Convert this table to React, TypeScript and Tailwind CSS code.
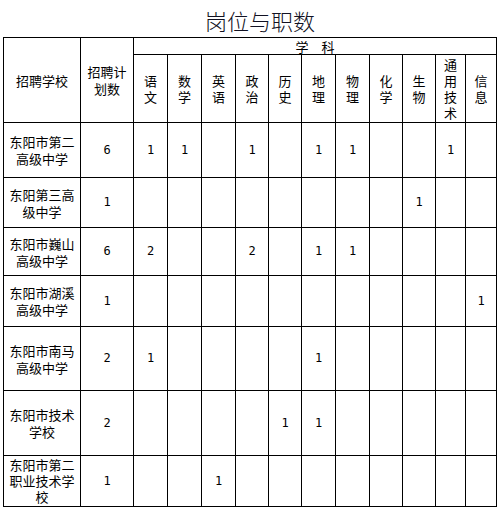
import React from "react";

const cjk = { fontFamily: '"Noto Sans CJK SC", "Noto Sans", sans-serif' };
const num = { fontFamily: '"DejaVu Sans Mono", "Liberation Mono", monospace' };

const subjects = [
  ["语", "文"],
  ["数", "学"],
  ["英", "语"],
  ["政", "治"],
  ["历", "史"],
  ["地", "理"],
  ["物", "理"],
  ["化", "学"],
  ["生", "物"],
  ["通", "用", "技", "术"],
  ["信", "息"],
];

type Row = { school: string[]; plan: string; vals: string[]; h: string };

const rows: Row[] = [
  { school: ["东阳市第二", "高级中学"], plan: "6", vals: ["1", "1", "", "1", "", "1", "1", "", "", "1", ""], h: "h-[55px]" },
  { school: ["东阳第三高", "级中学"], plan: "1", vals: ["", "", "", "", "", "", "", "", "1", "", ""], h: "h-[50px]" },
  { school: ["东阳市巍山", "高级中学"], plan: "6", vals: ["2", "", "", "2", "", "1", "1", "", "", "", ""], h: "h-[48px]" },
  { school: ["东阳市湖溪", "高级中学"], plan: "1", vals: ["", "", "", "", "", "", "", "", "", "", "1"], h: "h-[51px]" },
  { school: ["东阳市南马", "高级中学"], plan: "2", vals: ["1", "", "", "", "", "1", "", "", "", "", ""], h: "h-[64px]" },
  { school: ["东阳市技术", "学校"], plan: "2", vals: ["", "", "", "", "1", "1", "", "", "", "", ""], h: "h-[65px]" },
  { school: ["东阳市第二", "职业技术学", "校"], plan: "1", vals: ["", "", "1", "", "", "", "", "", "", "", ""], h: "h-[51px]" },
];

const colW = [77, 53, 34, 34, 34, 33, 33, 34, 34, 33, 33, 30, 31];

export default function App() {
  return (
    <div className="w-[500px] h-[510px] bg-white text-black" style={cjk}>
      <div className="h-[37px] flex items-center justify-center pl-5 pt-[3px]">
        <span className="text-[22px] font-light leading-none text-[#111122]">岗位与职数</span>
      </div>
      <table className="ml-[3px] w-[494px] table-fixed border-collapse text-[13px] leading-[17px]">
        <colgroup>
          {colW.map((w, i) => (
            <col key={i} style={{ width: w }} />
          ))}
        </colgroup>
        <tbody>
          <tr className="h-[17px]">
            <td rowSpan={2} className="border border-black text-center align-middle p-0">
              招聘学校
            </td>
            <td rowSpan={2} className="border border-black text-center align-middle p-0">
              招聘计
              <br />
              划数
            </td>
            <td colSpan={11} className="border border-black text-center align-middle p-0 leading-[15px]">
              学　科
            </td>
          </tr>
          <tr className="h-[68px]">
            {subjects.map((s, i) => (
              <td key={i} className="border border-black text-center align-middle p-0 leading-[16px]">
                {s.map((c, j) => (
                  <div key={j}>{c}</div>
                ))}
              </td>
            ))}
          </tr>
          {rows.map((r, i) => (
            <tr key={i} className={r.h}>
              <td className={`border border-black text-center align-middle p-0 ${r.school.length > 2 ? "leading-[16px]" : ""}`}>
                {r.school.map((l, j) => (
                  <div key={j}>{l}</div>
                ))}
              </td>
              <td className="border border-black text-center align-middle p-0 text-[12px]" style={num}>
                {r.plan}
              </td>
              {r.vals.map((v, j) => (
                <td key={j} className="border border-black text-center align-middle p-0 text-[12px]" style={num}>
                  {v}
                </td>
              ))}
            </tr>
          ))}
        </tbody>
      </table>
    </div>
  );
}
